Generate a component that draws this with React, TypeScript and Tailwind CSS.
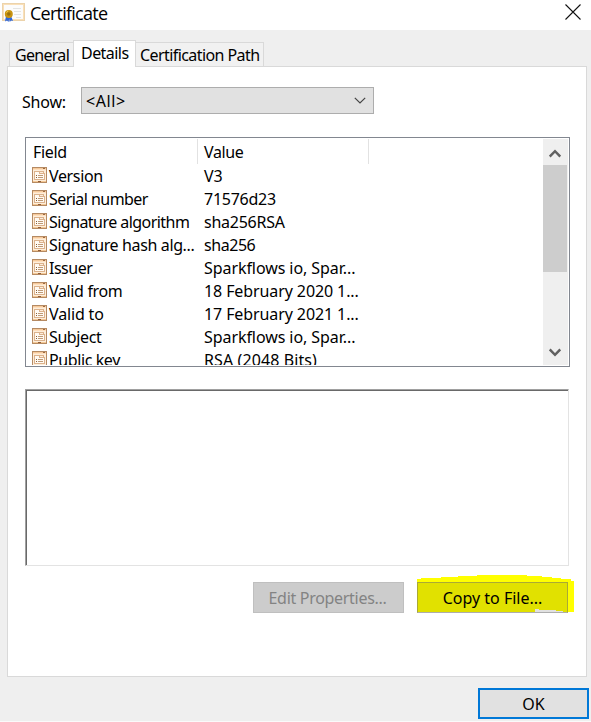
import React from "react";

const rows = [
  { field: "Version", value: "V3", f: "tracking-[-0.35px]", v: "" },
  { field: "Serial number", value: "71576d23", f: "tracking-[-0.55px]", v: "tracking-[-0.25px]" },
  { field: "Signature algorithm", value: "sha256RSA", f: "tracking-[-0.55px]", v: "tracking-[-0.25px]" },
  { field: "Signature hash alg...", value: "sha256", f: "tracking-[-0.37px]", v: "tracking-[-0.45px]" },
  { field: "Issuer", value: "Sparkflows io, Spar...", f: "tracking-[-0.5px]", v: "tracking-[-0.07px]" },
  { field: "Valid from", value: "18 February 2020 1...", f: "tracking-[-0.35px]", v: "tracking-[-0.1px]" },
  { field: "Valid to", value: "17 February 2021 1...", f: "tracking-[-0.15px]", v: "tracking-[-0.1px]" },
  { field: "Subject", value: "Sparkflows io, Spar...", f: "tracking-[-0.4px]", v: "tracking-[-0.07px]" },
  { field: "Public key", value: "RSA (2048 Bits)", f: "tracking-[-0.4px]", v: "tracking-[0.1px]" },
];

function CertificateIcon() {
  return (
    <svg width="24" height="21" viewBox="0 0 24 21" className="shrink-0">
      <rect x="0.5" y="0.5" width="22" height="17" fill="#fffdf8" stroke="#ecd3ab" />
      <rect x="1.5" y="1.5" width="20" height="15" fill="#fcfcfc" stroke="#fae0b9" />
      <path d="M11 5.5h8M12 8.5h7M12 11.5h7M14 14.5h5" stroke="#e4e4e2" />
      <path d="M4 13l-1 5.500 2-1 1.500 1.500.8-4z" fill="#2f68dc" />
      <path d="M9 13l2 5-2-.6-1.200 1.600-1-4z" fill="#2f68dc" />
      <circle cx="6.800" cy="11" r="4" fill="#c89310" />
      <circle cx="6.800" cy="11" r="1.800" fill="#98700d" />
      <path d="M4.300 9.500l2-1.500" stroke="#f2cf54" />
    </svg>
  );
}

function FieldIcon() {
  return (
    <svg width="15" height="16" viewBox="0 0 15 16" className="mt-[1px] shrink-0" shapeRendering="crispEdges">
      <rect x="0.5" y="0.5" width="14" height="15" fill="#fdeedb" stroke="#b58a63" />
      <path d="M1 1.5h13" stroke="#f5c99b" />
      <path d="M11 1.5h2" stroke="#9b6a42" />
      <path d="M1 2.5h13" stroke="#ffdfbd" />
      <path d="M2.5 12.5v-8h5v2h5v6z" fill="#fffaf3" stroke="#dcb28c" />
      <path d="M7.5 4.5h4v2" fill="none" stroke="#dcb28c" />
      <path d="M4 8.5h1M4 10.5h1" stroke="#8a6038" />
      <path d="M6 8.5h5M6 10.5h5" stroke="#bf9a76" />
      <path d="M1 14.5h13" stroke="#f4c895" />
      <path d="M6 14.5h3" stroke="#935d37" />
    </svg>
  );
}

export default function App() {
  return (
    <div className="flex h-[722px] w-[591px] flex-col overflow-hidden border-b border-[#fafafa] bg-[#efefef] font-['Noto_Sans',sans-serif] text-[16px] leading-[23px] whitespace-pre text-black">
      <header className="flex h-[30px] shrink-0 bg-white pt-[3px] pl-[2px]">
        <CertificateIcon />
        <h1 className="-mt-[2px] ml-[4px] font-['Open_Sans',sans-serif] text-[18px] leading-[24px] tracking-[-0.75px]">Certificate</h1>
        <svg width="16" height="16" viewBox="0 0 16 16" className="mt-[1px] mr-[10px] ml-auto">
          <path d="M.5.5l15 15M15.5.5l-15 15" stroke="#111" strokeWidth="1.1" />
        </svg>
      </header>
      <nav className="z-10 flex h-[37px] shrink-0 items-end pl-[9px]">
        <div className="mb-[1px] h-[24px] w-[64px] border-t border-l border-[#d9d9d9] bg-[#f1f1f1] pt-[1px] pl-[5px] tracking-[-0.7px]">General</div>
        <div className="h-[27px] w-[63px] border-x border-t border-[#d9d9d9] bg-white pt-[1px] pl-[7px] tracking-[-0.55px]">Details</div>
        <div className="mb-[1px] h-[24px] w-[128px] border-t border-r border-[#d9d9d9] bg-[#f1f1f1] pt-[1px] pl-[4px] tracking-[-0.58px]">Certification Path</div>
      </nav>
      <main className="-mt-[1px] ml-[7px] flex h-[611px] w-[580px] shrink-0 flex-col border border-[#d9d9d9] bg-white pl-[17px]">
        <div className="mt-[20px] flex h-[27px] shrink-0">
          <label className="-ml-[3px] w-[56px] pt-[4px] tracking-[-0.2px]">Show:</label>
          <div className="ml-[3px] flex w-[293px] items-center justify-between border border-[#adadad] bg-[#e1e1e1] pr-[7px] pl-[4px]">
            <span className="pt-[2px] tracking-[0.6px]">&lt;All&gt;</span>
            <svg width="12" height="7" viewBox="0 0 12 7">
              <path d="M.8.8L6 6l5.200-5.200" fill="none" stroke="#444" strokeWidth="1.2" />
            </svg>
          </div>
        </div>
        <section className="mt-[23px] flex h-[230px] w-[545px] shrink-0 justify-between border border-[#828790] pt-[1px] pr-[1px] pb-[1px]">
          <div className="w-[343px] overflow-hidden">
            <div className="flex h-[25px]">
              <div className="w-[172px] border-r border-[#e2e2e2] pt-[2px] pl-[7px] tracking-[-0.35px]">Field</div>
              <div className="w-[171px] border-r border-[#e2e2e2] pt-[2px] pl-[6px] tracking-[-0.35px]">Value</div>
            </div>
            {rows.map((row) => (
              <div className="flex h-[23px]" key={row.field}>
                <div className="flex w-[178px] pl-[6px]">
                  <div className="pt-[2px]"><FieldIcon /></div>
                  <span className={"ml-[2px] pt-[1px] " + row.f}>{row.field}</span>
                </div>
                <span className={"pt-[1px] " + row.v}>{row.value}</span>
              </div>
            ))}
          </div>
          <div className="flex w-[25px] flex-col bg-[#efefef]">
            <div className="flex h-[26px] w-[24px] items-center justify-center pt-[2px]">
              <svg width="12" height="9" viewBox="0 0 12 9"><path d="M.7 7.500L6 2.200l5.300 5.300" fill="none" stroke="#606060" strokeWidth="2.500" /></svg>
            </div>
            <div className="h-[107px] w-[24px] bg-[#cdcdcd]" />
            <div className="mt-auto flex h-[26px] w-[24px] items-center justify-center">
              <svg width="12" height="9" viewBox="0 0 12 9"><path d="M.7 1.500L6 6.800l5.300-5.300" fill="none" stroke="#606060" strokeWidth="2.500" /></svg>
            </div>
          </div>
        </section>
        <div className="mt-[22px] h-[177px] w-[544px] shrink-0 border border-t-[#a0a0a0] border-r-[#e3e3e3] border-b-[#e3e3e3] border-l-[#a0a0a0]">
          <div className="h-full border-t border-l border-[#696969]" />
        </div>
        <div className="mt-[16px] flex pl-[228px]">
          <button className="h-[31px] w-[151px] border border-[#bfbfbf] bg-[#cccccc] pt-[2px] pr-[2px] tracking-[-0.3px] text-[#838383]">Edit Properties...</button>
          <div className="relative ml-[13px] h-[31px] w-[157px]">
            <svg className="absolute -top-[7px] left-0" width="157" height="38" viewBox="0 0 157 38" shapeRendering="crispEdges">
              <path d="M0 7V4h4V3h20V2h17V1h19V0h50v1h15v1h10v1h9v1h10v2h3v31H0z" fill="#ffff00" />
            </svg>
            <button className="relative h-[31px] w-[151px] border border-[#a9a936] border-b-[#adadad] bg-[#e1e100] pt-[2px]">Copy to File...</button>
            <svg className="absolute top-[27px] left-[118px]" width="28" height="3" viewBox="0 0 28 3" shapeRendering="crispEdges">
              <path d="M0 0h4v1h17v1h7v1H0z" fill="#e1e1e1" />
            </svg>
          </div>
        </div>
      </main>
      <button className="mt-[11px] mr-[2px] ml-auto h-[31px] w-[111px] shrink-0 border-2 border-[#0078d7] bg-[#e1e1e1] pt-[2px]">OK</button>
    </div>
  );
}
